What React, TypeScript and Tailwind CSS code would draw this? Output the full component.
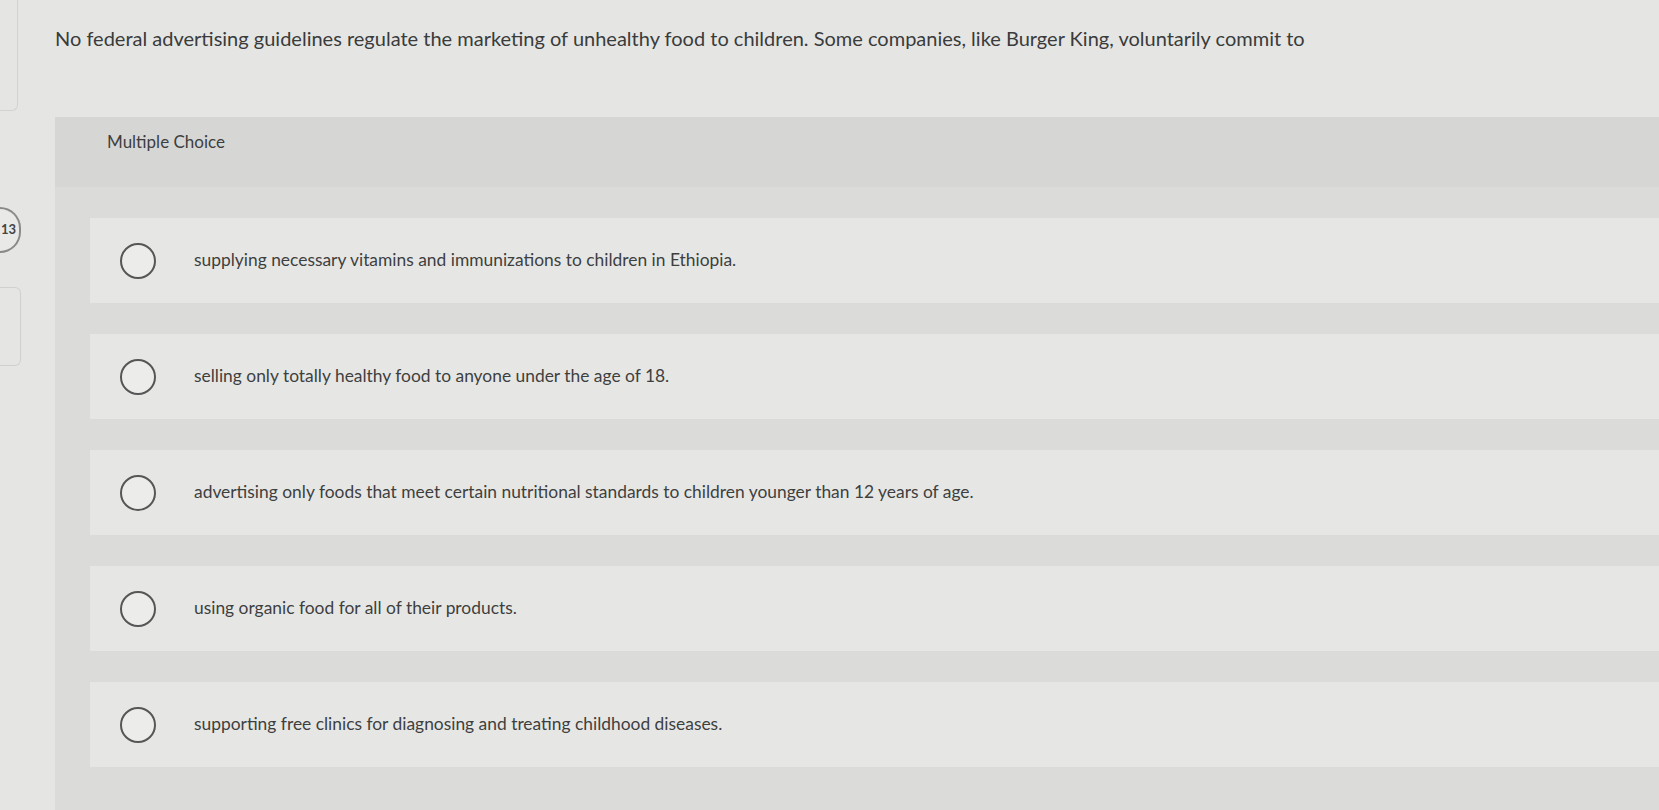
const options = [
  "supplying necessary vitamins and immunizations to children in Ethiopia.",
  "selling only totally healthy food to anyone under the age of 18.",
  "advertising only foods that meet certain nutritional standards to children younger than 12 years of age.",
  "using organic food for all of their products.",
  "supporting free clinics for diagnosing and treating childhood diseases.",
];

export default function App() {
  return (
    <div
      className="flex h-[810px] w-[1659px] overflow-hidden bg-[#e5e6e4] text-[#3b3c3c]"
      style={{ fontFamily: "Lato, 'Open Sans', sans-serif" }}
    >
      {/* left rail */}
      <div className="flex w-[21px] shrink-0 flex-col">
        <div className="h-[111px] w-[18px] rounded-br-md border-r border-b border-[#d2d3d1]" />
        <div className="mt-[96px] flex h-[46px] w-[21px] items-center justify-end rounded-r-full border-2 border-l-0 border-[#8a8b89] bg-[#e9eae8] pr-[3px] text-[13px] font-bold text-[#444]">
          13
        </div>
        <div className="mt-[34px] h-[79px] w-[21px] rounded-r-md border border-l-0 border-[#d0d1cf]" />
      </div>

      <div className="flex flex-1 flex-col">
        <p className="mt-[24px] ml-[34px] text-[20px] leading-[28px] text-[#3a3b3b]">
          No federal advertising guidelines regulate the marketing of unhealthy food to children. Some companies, like Burger King, voluntarily commit to
        </p>

        <div className="mt-[65px] ml-[34px] flex flex-1 flex-col bg-[#dbdcda]">
          <div className="h-[70px] bg-[#d6d7d5] pt-[12px] pl-[52px] text-[17px] text-[#3d3e3e]">
            Multiple Choice
          </div>
          <div className="flex flex-col gap-[31px] pt-[31px] pl-[35px]">
            {options.map((o) => (
              <div key={o} className="flex h-[85px] items-center bg-[#e6e7e5] pl-[30px]">
                <span className="h-[36px] w-[36px] shrink-0 rounded-full border-2 border-[#555655] bg-[#ecedeb]" />
                <span className="ml-[38px] text-[17.4px] text-[#3e3f3f]">{o}</span>
              </div>
            ))}
          </div>
        </div>
      </div>
    </div>
  );
}
